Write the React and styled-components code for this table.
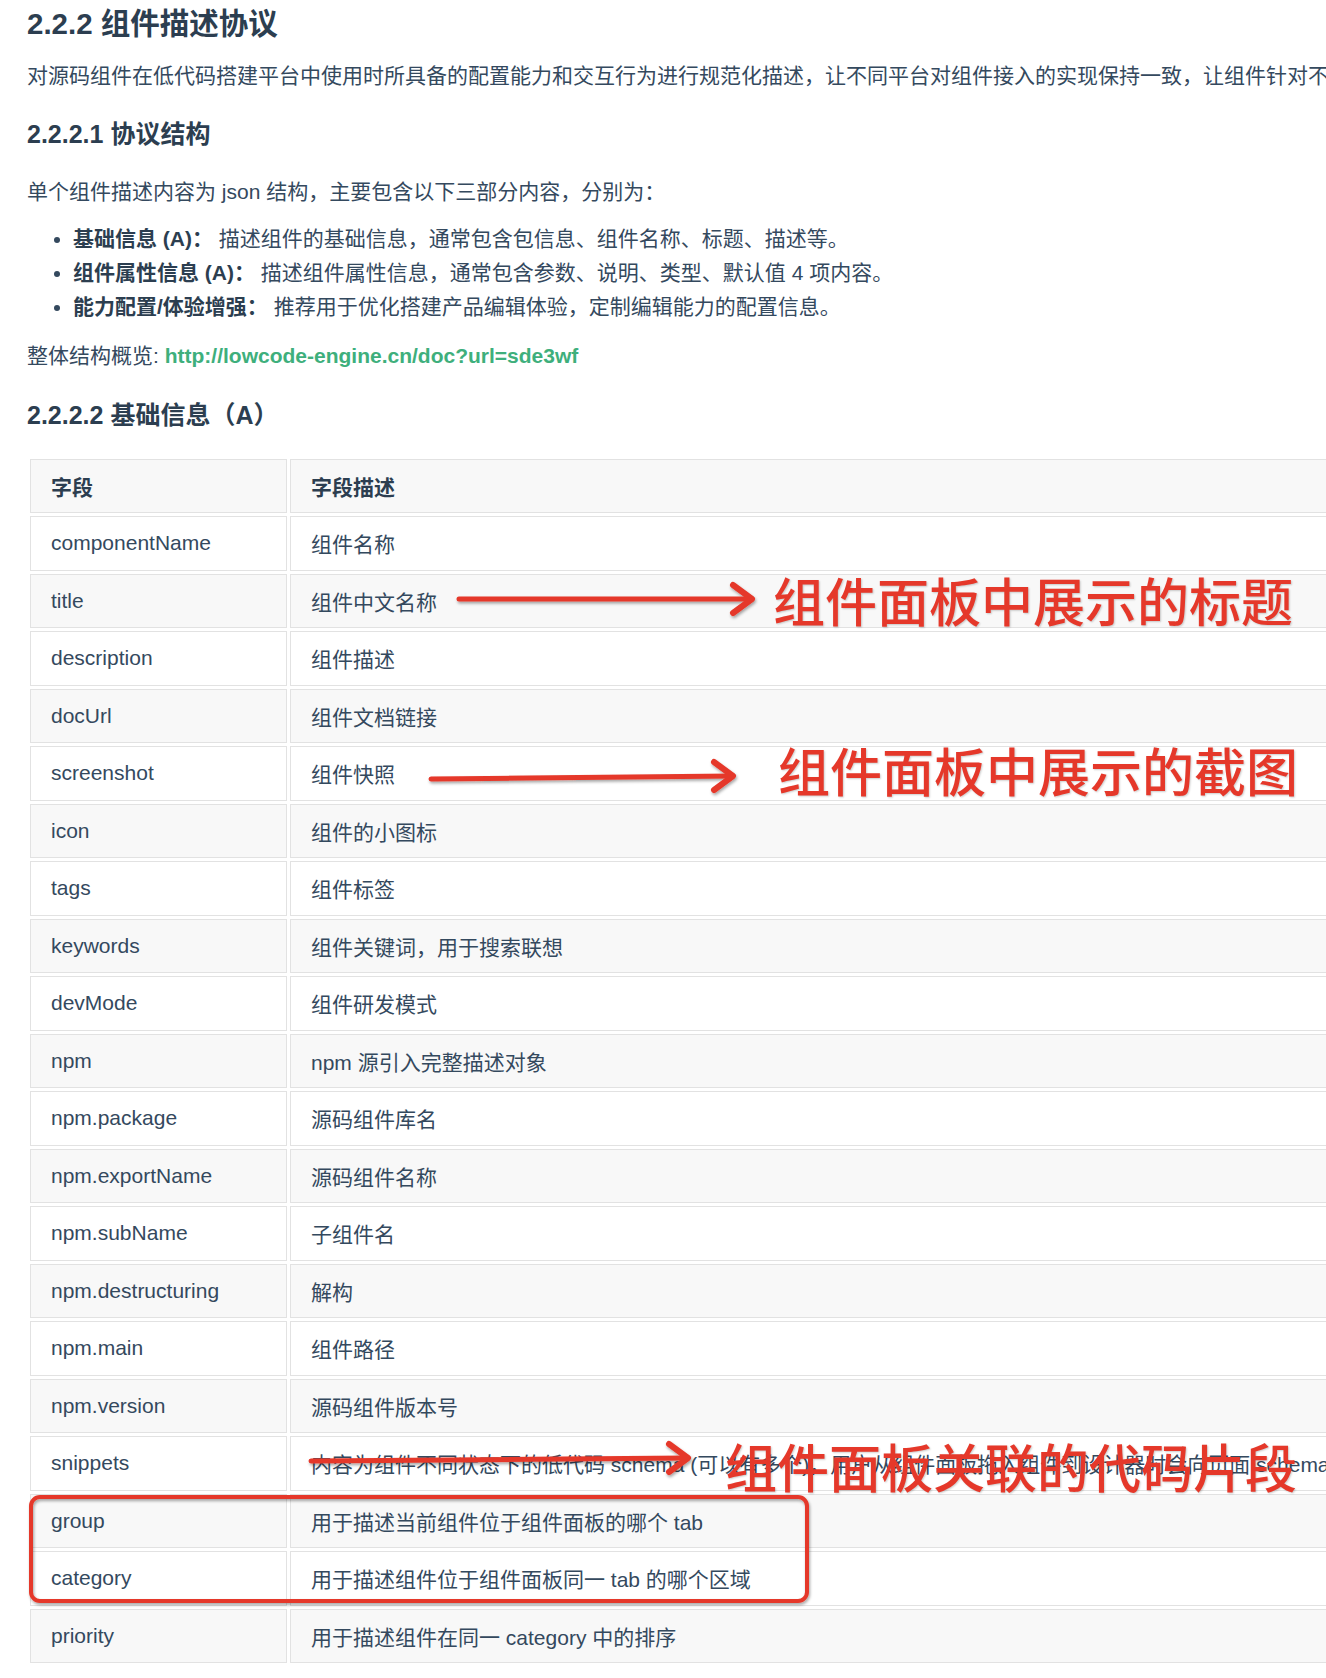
import React from "react";
import styled, { createGlobalStyle } from "styled-components";

const rows = [
  ["componentName", "组件名称"],
  ["title", "组件中文名称"],
  ["description", "组件描述"],
  ["docUrl", "组件文档链接"],
  ["screenshot", "组件快照"],
  ["icon", "组件的小图标"],
  ["tags", "组件标签"],
  ["keywords", "组件关键词，用于搜索联想"],
  ["devMode", "组件研发模式"],
  ["npm", "npm 源引入完整描述对象"],
  ["npm.package", "源码组件库名"],
  ["npm.exportName", "源码组件名称"],
  ["npm.subName", "子组件名"],
  ["npm.destructuring", "解构"],
  ["npm.main", "组件路径"],
  ["npm.version", "源码组件版本号"],
  [
    "snippets",
    "内容为组件不同状态下的低代码 schema (可以有多个)，用户从组件面板拖入组件到设计器时会向页面 schema 中插入 snippets 中定义的组件低代码片段",
  ],
  ["group", "用于描述当前组件位于组件面板的哪个 tab"],
  ["category", "用于描述组件位于组件面板同一 tab 的哪个区域"],
  ["priority", "用于描述组件在同一 category 中的排序"],
];

const bullets = [
  ["基础信息 (A)：", " 描述组件的基础信息，通常包含包信息、组件名称、标题、描述等。"],
  ["组件属性信息 (A)：", " 描述组件属性信息，通常包含参数、说明、类型、默认值 4 项内容。"],
  ["能力配置/体验增强：", " 推荐用于优化搭建产品编辑体验，定制编辑能力的配置信息。"],
];

// red annotations drawn on top of the doc
const arrows = [
  { x1: 459, y1: 599, x2: 752, y2: 599 },
  { x1: 431, y1: 779, x2: 733, y2: 776 },
  { x1: 311, y1: 1461, x2: 688, y2: 1458 },
];

const labels = [
  { x: 773, y: 574, text: "组件面板中展示的标题" },
  { x: 778, y: 744, text: "组件面板中展示的截图" },
  { x: 725, y: 1440, text: "组件面板关联的代码片段" },
];

function App() {
  return (
    <>
      <GlobalStyle />
      <Page>
        <Title>2.2.2 组件描述协议</Title>
        <Para $first>
          对源码组件在低代码搭建平台中使用时所具备的配置能力和交互行为进行规范化描述，让不同平台对组件接入的实现保持一致，让组件针对不同的平台有一致的配置能力。
        </Para>
        <SubTitle>2.2.2.1 协议结构</SubTitle>
        <Para>单个组件描述内容为 json 结构，主要包含以下三部分内容，分别为：</Para>
        <List>
          {bullets.map(([b, t]) => (
            <li key={b}>
              <strong>{b}</strong>
              {t}
            </li>
          ))}
        </List>
        <Para $tight>
          整体结构概览: <Link>http://lowcode-engine.cn/doc?url=sde3wf</Link>
        </Para>
        <SubTitle $table>2.2.2.2 基础信息（A）</SubTitle>
        <Table>
          <thead>
            <tr>
              <Th $first>字段</Th>
              <Th>字段描述</Th>
            </tr>
          </thead>
          <tbody>
            {rows.map(([k, v]) => (
              <tr key={k}>
                <Td $first>{k}</Td>
                <Td>{v}</Td>
              </tr>
            ))}
          </tbody>
        </Table>

        <Overlay width="1326" height="1678">
          <defs>
            <filter id="shadow" x="-10%" y="-50%" width="120%" height="200%">
              <feDropShadow dx="1" dy="2" stdDeviation="1.5" floodColor="#000" floodOpacity="0.35" />
            </filter>
          </defs>
          {arrows.map((a, i) => (
            <g key={i} filter="url(#shadow)" stroke="#e5382a" fill="none" strokeLinecap="round" strokeLinejoin="round">
              <line x1={a.x1} y1={a.y1} x2={a.x2} y2={a.y2} strokeWidth="5" />
              <polyline
                points={`${a.x2 - 19},${a.y2 - 14} ${a.x2},${a.y2} ${a.x2 - 19},${a.y2 + 14}`}
                strokeWidth="6"
              />
            </g>
          ))}
          <rect
            x="31"
            y="1497"
            width="776"
            height="104"
            rx="9"
            fill="none"
            stroke="#e5382a"
            strokeWidth="4"
            filter="url(#shadow)"
          />
        </Overlay>
        {labels.map((l) => (
          <Label key={l.text} style={{ left: l.x, top: l.y }}>
            {l.text}
          </Label>
        ))}
      </Page>
    </>
  );
}

export default App;

const GlobalStyle = createGlobalStyle`
  html, body {
    margin: 0;
    padding: 0;
    background: #fff;
    overflow: hidden;
  }
  body {
    font-family: "Liberation Sans", "Noto Sans CJK SC", sans-serif;
    color: #34495e;
    font-size: 21px;
  }
`;

const Page = styled.div`
  position: relative;
  width: 1700px;
  height: 1678px;
  padding-left: 27px;
  box-sizing: border-box;
  overflow: hidden;
`;

const Title = styled.h2`
  margin: 5px 0 0;
  font-size: 29.5px;
  line-height: 38px;
  font-weight: 700;
  color: #2c3e50;
`;

const SubTitle = styled.h3`
  margin: ${(p) => (p.$table ? "25px" : "24px")} 0 0;
  font-size: 25px;
  line-height: 34px;
  font-weight: 700;
  color: #2c3e50;
`;

const Para = styled.p`
  margin: ${(p) => (p.$first ? "16px" : p.$tight ? "14px" : "24px")} 0 0;
  line-height: 34px;
  white-space: nowrap;
`;

const List = styled.ul`
  margin: 13px 0 0;
  padding-left: 46px;
  li {
    line-height: 34.2px;
    white-space: nowrap;
  }
  strong {
    font-weight: 700;
    color: #2c3e50;
  }
`;

const Link = styled.a`
  color: #3eaf7c;
  font-weight: 600;
  text-decoration: none;
`;

const Table = styled.table`
  margin-top: 24px;
  border-collapse: separate;
  border-spacing: 3px;
  table-layout: fixed;
  width: 1620px;
  tr:nth-child(2n) td,
  thead th {
    background: #f8f8f8;
  }
`;

const Th = styled.th`
  height: 54.5px;
  box-sizing: border-box;
  border: 1px solid #e2e2e2;
  padding: 0 20px;
  text-align: left;
  font-weight: 700;
  color: #2c3e50;
  width: ${(p) => (p.$first ? "257px" : "auto")};
`;

const Td = styled.td`
  height: 54.5px;
  box-sizing: border-box;
  border: 1px solid #e2e2e2;
  padding: 0 20px;
  white-space: nowrap;
  overflow: visible;
  background: #fff;
`;

const Overlay = styled.svg`
  position: absolute;
  left: 0;
  top: 0;
  pointer-events: none;
`;

const Label = styled.span`
  position: absolute;
  font-family: "Noto Sans CJK SC", sans-serif;
  font-size: 52px;
  line-height: 52px;
  font-weight: 500;
  color: #e5382a;
  white-space: nowrap;
  text-shadow: 1px 1px 2px rgba(0, 0, 0, 0.2);
`;
